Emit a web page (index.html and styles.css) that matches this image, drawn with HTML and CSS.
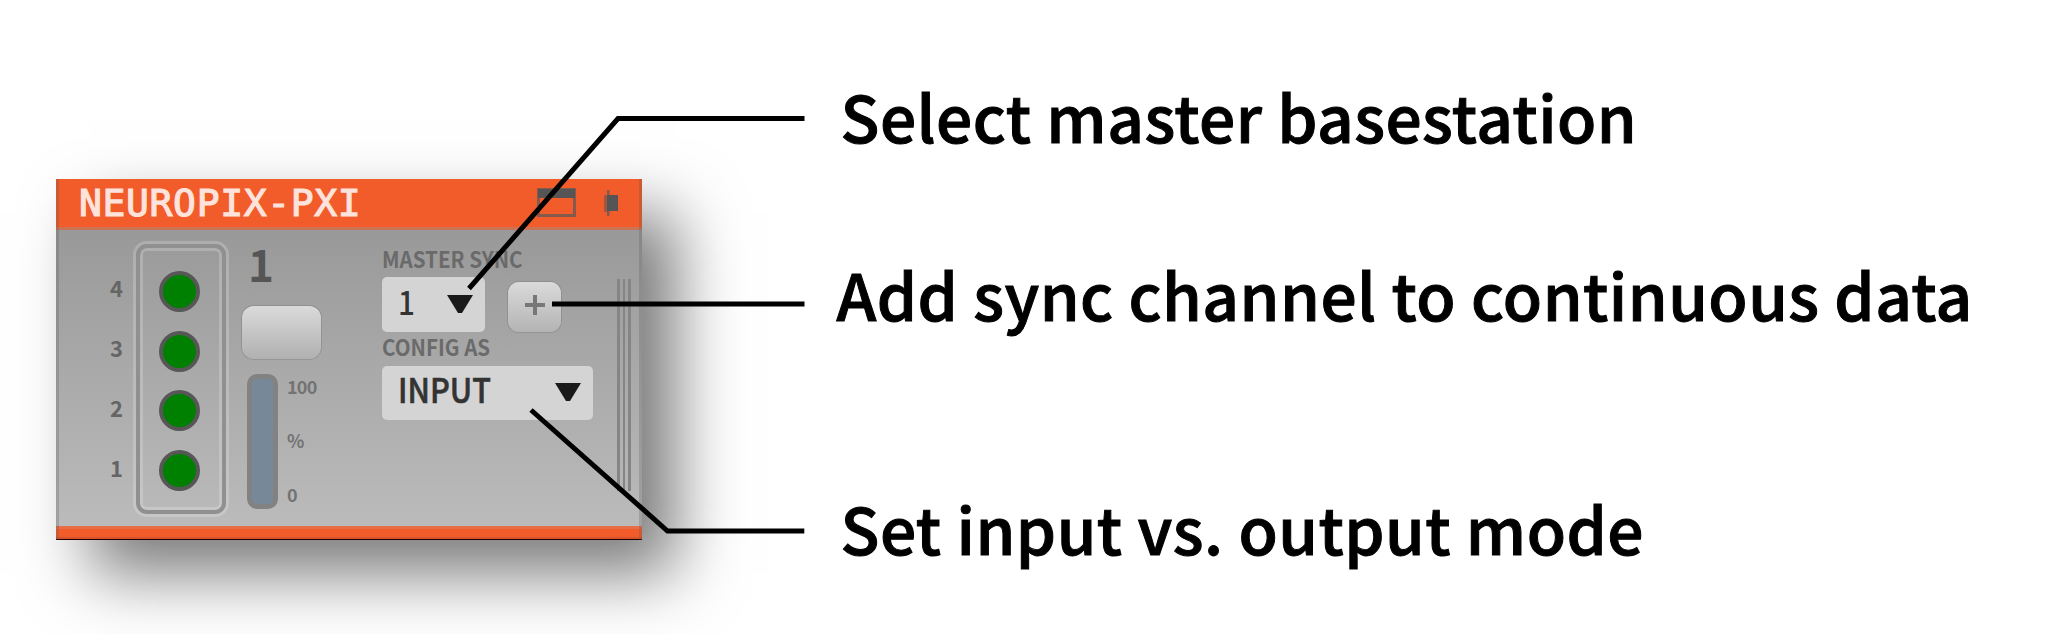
FILE: index.html
```html
<!DOCTYPE html>
<html lang="en">
<head>
<meta charset="utf-8">
<title>Neuropix-PXI</title>
<link rel="stylesheet" href="styles.css">
</head>
<body>
<main class="stage">
  <section class="panel">
    <header class="titlebar">
      <h1 class="title">NEUROPIX-PXI</h1>
      <svg class="icon-window" width="39" height="29" viewBox="0 0 39 29"><rect x="1.5" y="1.5" width="36" height="26" fill="none" stroke="#85594c" stroke-width="3"/><rect x="1" y="1" width="37" height="9" fill="#555"/></svg>
      <svg class="icon-collapse" width="14" height="28" viewBox="0 0 14 28"><path d="M0 6h3v17H0z" fill="#a05740"/><path d="M3 1h2.500v26H3z" fill="#85594c"/><path d="M3 6h11v16H3z" fill="#555"/></svg>
    </header>
    <div class="body">
      <ol class="ports"><li>4</li><li>3</li><li>2</li><li>1</li></ol>
      <div class="leds"><i class="led"></i><i class="led"></i><i class="led"></i><i class="led"></i></div>
      <div class="slot">
        <div class="slot-number">1</div>
        <div class="slot-button"></div>
        <div class="meter">
          <div class="bar"></div>
          <div class="scale"><span>100</span><span>%</span><span>0</span></div>
        </div>
      </div>
      <div class="settings">
        <div class="caption"><span class="cap-sync">MASTER SYNC</span></div>
        <div class="row">
          <div class="combo combo-sync"><span>1</span><svg width="26" height="18" viewBox="0 0 26 18"><path d="M0 0h26L15 18h-4z" fill="#1a1a1a"/></svg></div>
          <div class="add"><svg width="22" height="22" viewBox="0 0 22 22"><path d="M11 1v20M1 11h20" stroke="#777" stroke-width="4"/></svg></div>
        </div>
        <div class="caption caption-config"><span class="cap-config">CONFIG AS</span></div>
        <div class="combo combo-mode"><span>INPUT</span><svg width="26" height="18" viewBox="0 0 26 18"><path d="M0 0h26L15 18h-4z" fill="#1a1a1a"/></svg></div>
      </div>
      <div class="grip"><i></i><i></i><i></i></div>
    </div>
    <footer class="foot"></footer>
  </section>
  <section class="callouts">
    <p class="c1">Select master basestation</p>
    <p class="c2">Add sync channel to continuous data</p>
    <p class="c3">Set input vs. output mode</p>
  </section>
  <svg class="leaders" width="2052" height="634" viewBox="0 0 2052 634" fill="none" stroke="#000" stroke-width="5">
    <path d="M469 288.500L618 118.500H804.500"/>
    <path d="M552 304H804.500"/>
    <path d="M531 410L667.500 531H804.300"/>
  </svg>
</main>
</body>
</html>
```
FILE: styles.css
```css
* { box-sizing: border-box; }
body { margin: 0; background: #fff; font-family: "Noto Sans CJK SC", sans-serif; }
.stage { position: relative; width: 2052px; height: 634px; display: flex; align-items: flex-start; overflow: hidden; }
.panel {
  position: relative; flex: none; width: 586px; height: 361px; margin: 179px 0 0 56px;
  display: flex; flex-direction: column;
  box-shadow: 34px 34px 62px rgba(0,0,0,.52);
}
.panel::after { content: ""; position: absolute; inset: 0; border: solid rgba(85,85,85,.25); border-width: 0 3px; }
.titlebar {
  height: 51px; flex: none; background: #f25b2a; border-bottom: 3px solid #cb7455;
  display: flex; align-items: flex-start; padding: 9px 24px 0 23px;
}
.title { margin: -3px auto 0 0; font: 400 38px/36px "DejaVu Sans Mono", monospace; letter-spacing: .65px; color: #fde3dc; -webkit-text-stroke: 1.200px #fde3dc; }
.icon-collapse { margin: 1px 0 0 28px; }
.body { flex: none; height: 296px; display: flex; align-items: flex-start; background: linear-gradient(#999, #bbb); }
.foot { height: 14px; background: #f25b2a; border-top: 3px solid #e66f4a; border-bottom: 1px solid #200; box-shadow: inset 0 -2px #d9532a; }

.ports { list-style: none; margin: 42px 0 0 54px; padding: 0; width: 26px; display: flex; flex-direction: column; gap: 30px; }
.ports li { font-size: 22px; line-height: 30px; font-weight: 700; color: #656565; }
.leds {
  width: 90px; height: 270px; margin-top: 14px; padding-top: 23px;
  display: flex; flex-direction: column; align-items: center; gap: 18.700px; padding-right: 3px;
  border: 4px solid #909090; border-radius: 11px;
  box-shadow: 0 0 0 3px rgba(255,255,255,.2), inset 0 0 0 3px rgba(255,255,255,.2);
}
.led { flex: none; width: 41px; height: 41px; border-radius: 50%; background: #008000; border: 4px solid #575757; }
.slot { flex: none; width: 90px; margin-left: 16px; }
.slot-number { height: 60px; margin: 3px 0 0 6px; font-size: 44px; line-height: 60px; font-weight: 700; color: #555; }
.slot-button { width: 79px; height: 53px; margin-top: 13px; border-radius: 12px; background: linear-gradient(#dadada, #b0b0b0); box-shadow: 0 0 0 1px rgba(80,80,80,.22); }
.meter { display: flex; margin: 15px 0 0 5px; }
.bar { width: 31px; height: 135px; border: 5px solid #828282; border-radius: 10px; background: #778899; }
.scale { margin: 1px 0 0 9px; height: 130px; display: flex; flex-direction: column; justify-content: space-between; font-size: 18px; line-height: 22px; font-weight: 700; color: #737373; letter-spacing: -.8px; }
.settings { flex: none; width: 211px; margin: 13px 0 0 50px; }
.caption { height: 30px; font-size: 22px; line-height: 30px; font-weight: 700; color: #6a6a6a; white-space: nowrap; }
.caption span { display: inline-block; transform-origin: 0 50%; transform: scaleX(.935); }
.row { display: flex; gap: 22px; margin-top: 4px; }
.combo { height: 55px; border-radius: 5px; background: #d4d4d4; display: flex; justify-content: space-between; align-items: center; padding: 0 12px 2px 16px; font-size: 34px; line-height: 48px; color: #333; }
.combo span { margin-top: -6px; font-weight: 500; transform: scaleX(.9); transform-origin: 0 50%; -webkit-text-stroke: .6px #333; }
.combo-sync { width: 103px; }
.combo-mode { width: 211px; height: 54px; margin-top: 5px; }
.combo-sync span { font-size: 33px; -webkit-text-stroke: 0; }
.add { width: 53px; height: 50px; margin: 5px 0 0 1px; border-radius: 11px; background: linear-gradient(#dadada, #b4b4b4); box-shadow: 0 0 0 1px rgba(80,80,80,.2); display: flex; justify-content: center; align-items: flex-start; padding-top: 12px; }
.caption-config { margin-top: -1px; }
.grip { display: flex; gap: 3px; margin: 49px 0 0 24px; }
.grip i { width: 2.600px; height: 212px; background: #858585; }

.callouts { margin: 75px 0 0 198.500px; font-size: 64px; line-height: 80px; font-weight: 500; letter-spacing: .47px; -webkit-text-stroke: 1px #000; color: #000; white-space: nowrap; }
.callouts p { margin: 0; }
.callouts .c1 { margin-bottom: 98px; }
.callouts .c2 { margin-left: -4px; margin-bottom: 154px; }
.leaders { position: absolute; inset: 0; }
```
